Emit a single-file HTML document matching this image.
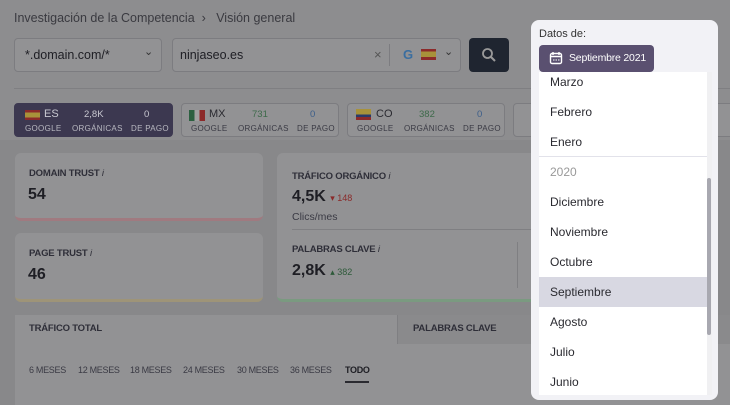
<!DOCTYPE html>
<html><head><meta charset="utf-8"><style>
*{box-sizing:border-box;margin:0;padding:0}
body{width:730px;height:405px;overflow:hidden;background:#88888a;font-family:"Liberation Sans",sans-serif;position:relative;color:#2a2a30}
.a{position:absolute}
.top{left:0;top:0;width:730px;height:140px;background:#8d8d8f}
.box{background:#929294;border:1px solid #7c7c80;border-radius:4px}
.card{background:#929294;border-radius:6px}
.lbl{font-size:9.5px;font-weight:bold;color:#2e2e38;letter-spacing:-.2px}
.big{font-size:16px;font-weight:bold;color:#1e1e24}
.tab{border:1px solid #7c7c80;border-radius:4px;background:#929294;height:34px}
.it{position:absolute;left:550px;font-size:12px;color:#2a2a30}
.m{position:absolute;top:365px;font-size:9px;color:#3a3a44;letter-spacing:-.3px}
.s{font-size:8px;letter-spacing:.3px}
</style></head><body>
<div class="a top"></div>
<div class="a" style="left:14px;top:11px;font-size:12.5px;color:#3a3a40">Investigación de la Competencia &nbsp;›&nbsp;&nbsp; Visión general</div>
<div class="a box" style="left:14px;top:38px;width:148px;height:34px"></div>
<div class="a" style="left:25px;top:48px;font-size:12.5px;color:#1e1e24">*.domain.com/*</div>
<div class="a" style="left:144px;top:45px;font-size:11px;color:#333">⌄</div>
<div class="a box" style="left:172px;top:38px;width:289px;height:34px"></div>
<div class="a" style="left:180px;top:48px;font-size:12.5px;color:#1e1e24">ninjaseo.es</div>
<div class="a" style="left:374px;top:47px;font-size:13px;color:#555">×</div>
<div class="a" style="left:389px;top:44px;width:1px;height:22px;background:#7c7c80"></div>
<div class="a" style="left:403px;top:47px;font-size:13px;font-weight:bold;color:#3a6ea0">G</div>
<div class="a" style="left:421px;top:49px;width:15px;height:11px;background:linear-gradient(#8c2a2a 25%,#a8923a 25% 75%,#8c2a2a 75%)"></div>
<div class="a" style="left:444px;top:45px;font-size:11px;color:#333">⌄</div>
<div class="a" style="left:469px;top:38px;width:40px;height:34px;background:#1f2530;border-radius:4px"></div>
<svg class="a" style="left:481px;top:47px" width="16" height="16"><circle cx="6.5" cy="6.5" r="4.5" stroke="#999" stroke-width="1.8" fill="none"/><path d="M10 10l4 4" stroke="#999" stroke-width="2"/></svg>
<div class="a" style="left:14px;top:88px;width:716px;height:1px;background:#7f7f82"></div>

<div class="a tab" style="left:14px;top:103px;width:159px;background:#3c3850;border-color:#3c3850"></div>
<div class="a" style="left:25px;top:110px;width:15px;height:10px;background:linear-gradient(#8c2a2a 25%,#a8923a 25% 75%,#8c2a2a 75%)"></div>
<div class="a" style="left:44px;top:108px;font-size:11px;color:#c8c8d0">ES</div>
<div class="a s" style="left:25px;top:124px;color:#b8b8c0">GOOGLE</div>
<div class="a" style="left:84px;top:109px;font-size:9.5px;color:#c8c8d0">2,8K</div>
<div class="a s" style="left:72px;top:124px;color:#b8b8c0">ORGÁNICAS</div>
<div class="a" style="left:144px;top:109px;font-size:9.5px;color:#c8c8d0">0</div>
<div class="a s" style="left:131px;top:124px;color:#b8b8c0">DE PAGO</div>

<div class="a tab" style="left:181px;top:103px;width:158px"></div>
<div class="a" style="left:189px;top:110px;width:16px;height:11px;background:linear-gradient(90deg,#2c6040 33%,#a0a0a0 33% 66%,#8c2a2a 66%)"></div>
<div class="a" style="left:209px;top:108px;font-size:11px;color:#2a2a30">MX</div>
<div class="a s" style="left:191px;top:124px;color:#3a3a44">GOOGLE</div>
<div class="a" style="left:252px;top:109px;font-size:9.5px;color:#3d6a4a">731</div>
<div class="a s" style="left:238px;top:124px;color:#3a3a44">ORGÁNICAS</div>
<div class="a" style="left:310px;top:109px;font-size:9.5px;color:#3c5e8a">0</div>
<div class="a s" style="left:297px;top:124px;color:#3a3a44">DE PAGO</div>

<div class="a tab" style="left:347px;top:103px;width:158px"></div>
<div class="a" style="left:356px;top:109px;width:15px;height:11px;background:linear-gradient(#a8923a 50%,#2a3a6a 50% 75%,#8c2a2a 75%)"></div>
<div class="a" style="left:376px;top:108px;font-size:11px;color:#2a2a30">CO</div>
<div class="a s" style="left:357px;top:124px;color:#3a3a44">GOOGLE</div>
<div class="a" style="left:419px;top:109px;font-size:9.5px;color:#3d6a4a">382</div>
<div class="a s" style="left:404px;top:124px;color:#3a3a44">ORGÁNICAS</div>
<div class="a" style="left:477px;top:109px;font-size:9.5px;color:#3c5e8a">0</div>
<div class="a s" style="left:463px;top:124px;color:#3a3a44">DE PAGO</div>
<div class="a tab" style="left:513px;top:103px;width:230px"></div>

<div class="a card" style="left:15px;top:153px;width:248px;height:68px;border-bottom:3px solid #a07a80"></div>
<div class="a lbl" style="left:29px;top:168px">DOMAIN TRUST <i style="font-weight:normal">i</i></div>
<div class="a big" style="left:28px;top:186px">54</div>
<div class="a card" style="left:15px;top:233px;width:248px;height:69px;border-bottom:3px solid #9e9478"></div>
<div class="a lbl" style="left:29px;top:248px">PAGE TRUST <i style="font-weight:normal">i</i></div>
<div class="a big" style="left:28px;top:266px">46</div>
<div class="a card" style="left:277px;top:153px;width:300px;height:149px;border-bottom:3px solid #7a9a80"></div>
<div class="a lbl" style="left:292px;top:171px">TRÁFICO ORGÁNICO <i style="font-weight:normal">i</i></div>
<div class="a big" style="left:292px;top:188px">4,5K <span style="font-size:9px;color:#8a2a2a;font-weight:normal">▾ 148</span></div>
<div class="a" style="left:292px;top:211px;font-size:10.5px;color:#3a3a44">Clics/mes</div>
<div class="a" style="left:292px;top:229px;width:290px;height:1px;background:#7f7f82"></div>
<div class="a lbl" style="left:292px;top:244px">PALABRAS CLAVE <i style="font-weight:normal">i</i></div>
<div class="a big" style="left:292px;top:262px">2,8K <span style="font-size:9px;color:#2e5a3a;font-weight:normal">▴ 382</span></div>
<div class="a" style="left:517px;top:242px;width:1px;height:46px;background:#7f7f82"></div>
<div class="a lbl" style="left:533px;top:244px">C</div>
<div class="a big" style="left:533px;top:262px">$</div>

<div class="a" style="left:15px;top:315px;width:715px;height:90px;background:#929294"></div>
<div class="a" style="left:397px;top:315px;width:333px;height:29px;background:#8a8a8c;border-left:1px solid #7f7f82"></div>
<div class="a lbl" style="left:29px;top:323px">TRÁFICO TOTAL</div>
<div class="a lbl" style="left:413px;top:323px">PALABRAS CLAVE</div>
<div class="m" style="left:29px">6 MESES</div>
<div class="m" style="left:78px">12 MESES</div>
<div class="m" style="left:130px">18 MESES</div>
<div class="m" style="left:183px">24 MESES</div>
<div class="m" style="left:237px">30 MESES</div>
<div class="m" style="left:290px">36 MESES</div>
<div class="m" style="left:345px;color:#1e1e24;font-weight:bold">TODO</div>
<div class="a" style="left:345px;top:381px;width:24px;height:2px;background:#2a2a30"></div>

<div class="a" style="left:531px;top:20px;width:187px;height:380px;background:#f2f2f6;border-radius:8px"></div>
<div class="a" style="left:539px;top:28px;font-size:11px;color:#333">Datos de:</div>
<div class="a" style="left:539px;top:45px;width:115px;height:27px;background:#5a5070;border-radius:4px"></div>
<svg class="a" style="left:549px;top:51px" width="14" height="14"><rect x="1.5" y="2.5" width="11" height="10" rx="1.5" fill="none" stroke="#fff" stroke-width="1.4"/><path d="M1.5 5.5h11M4 1v3M10 1v3" stroke="#fff" stroke-width="1.4"/><path d="M4 9h1.5M6.5 9h1.5M9 9h1.5" stroke="#fff" stroke-width="1"/></svg>
<div class="a" style="left:569px;top:52px;font-size:10.5px;color:#fff;letter-spacing:-.2px">Septiembre 2021</div>
<div class="a" style="left:539px;top:72px;width:168px;height:323px;background:#fff"></div>
<div class="a" style="left:707px;top:72px;width:5px;height:323px;background:#f0f0f2"></div>
<div class="a" style="left:707px;top:178px;width:4px;height:157px;background:#a8a8b0;border-radius:2px"></div>
<div class="a" style="left:539px;top:156px;width:168px;height:1px;background:#e2e2ea"></div>
<div class="a" style="left:539px;top:277px;width:168px;height:30px;background:#d8d8e2"></div>
<div class="it" style="top:75px">Marzo</div>
<div class="it" style="top:105px">Febrero</div>
<div class="it" style="top:135px">Enero</div>
<div class="it" style="top:165px;color:#999">2020</div>
<div class="it" style="top:195px">Diciembre</div>
<div class="it" style="top:225px">Noviembre</div>
<div class="it" style="top:255px">Octubre</div>
<div class="it" style="top:285px">Septiembre</div>
<div class="it" style="top:315px">Agosto</div>
<div class="it" style="top:345px">Julio</div>
<div class="it" style="top:375px">Junio</div>
</body></html>
